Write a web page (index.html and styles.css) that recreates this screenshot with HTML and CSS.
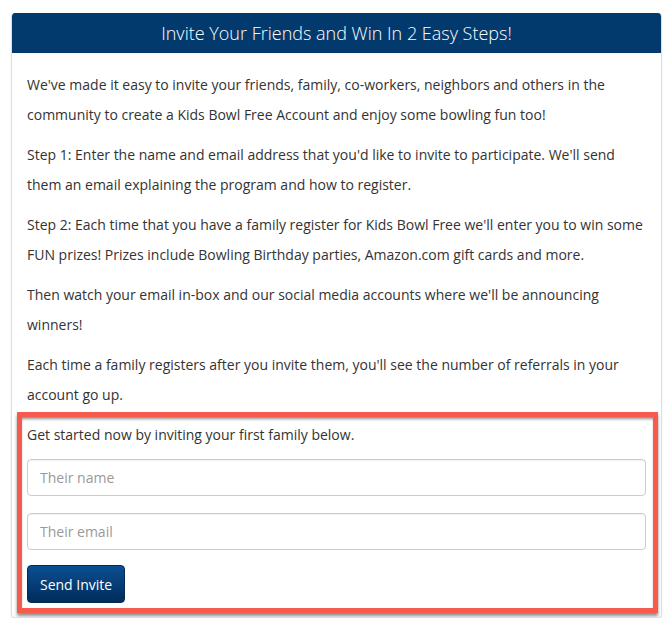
FILE: index.html
```html
<!DOCTYPE html>
<html lang="en">

<head>
    <meta charset="UTF-8">
    <meta name="viewport" content="width=device-width, initial-scale=1.0">
    <title>Invite Your Friends</title>
    <link rel="stylesheet" href="styles.css">
</head>

<body>
    <div class="card">
        <h1 class="card-title">Invite Your Friends and Win In 2 Easy Steps!</h1>
        <div class="card-body">
            <p>We've made it easy to invite your friends, family, co-workers, neighbors and others in the community to create a Kids Bowl Free Account and enjoy some bowling fun too!</p>
            <p>Step 1: Enter the name and email address that you'd like to invite to participate. We'll send them an email explaining the program and how to register.</p>
            <p>Step 2: Each time that you have a family register for Kids Bowl Free we'll enter you to win some FUN prizes! Prizes include Bowling Birthday parties, Amazon.com gift cards and more.</p>
            <p>Then watch your email in-box and our social media accounts where we'll be announcing winners!</p>
            <p>Each time a family registers after you invite them, you'll see the number of referrals in your account go up.</p>

            <form class="invite-box" id="invite-form">
                <div class="invite-intro">Get started now by inviting your first family below.</div>
                <input type="text" class="field" placeholder="Their name">
                <input type="email" class="field" placeholder="Their email">
                <button type="submit" class="btn-send">Send Invite</button>
            </form>
        </div>
    </div>
</body>

</html>
```

FILE: styles.css
```css
body {
    margin: 0;
    padding: 13px 9px 0 11px;
    background-color: #fff;
    font-family: "Open Sans", Arial, sans-serif;
    color: #333;
}

.card {
    width: 651px;
    box-sizing: border-box;
    border: 1px solid #dedede;
    border-top: none;
    border-radius: 4px;
    box-shadow: 0 1px 2px rgba(0, 0, 0, 0.08);
    overflow: hidden;
}

.card-title {
    margin: 0;
    height: 40px;
    line-height: 40px;
    background-color: #033a6e;
    color: #fff;
    font-size: 18px;
    font-weight: 300;
    text-align: center;
}

.card-body {
    padding: 17px 15px 4px 15px;
}

.card-body p {
    margin: 0 0 10px;
    font-size: 14px;
    line-height: 30px;
}

.card-body p:last-of-type {
    margin-bottom: 2px;
}

.invite-box {
    margin: 0 -12px 0 -10px;
    padding: 3px 7px 5px 5px;
    border: 5px solid #f65a4c;
    background-color: #fff;
    box-shadow: 0 3px 3px rgba(0, 0, 0, 0.45), inset 0 3px 3px -1px rgba(0, 0, 0, 0.45);
}

.invite-intro {
    font-size: 14px;
    line-height: 30px;
    margin-bottom: 9px;
}

.field {
    display: block;
    width: 100%;
    height: 37px;
    box-sizing: border-box;
    margin-bottom: 17px;
    padding: 0 12px;
    border: 1px solid #ccc;
    border-radius: 4px;
    box-shadow: inset 0 1px 1px rgba(0, 0, 0, 0.06);
    font-family: "Open Sans", Arial, sans-serif;
    font-size: 14px;
    color: #333;
}

.field + .field {
    margin-bottom: 15px;
}

.field::placeholder {
    color: #999;
}

.btn-send {
    display: block;
    height: 38px;
    padding: 0 12px;
    border: 1px solid #022a55;
    border-radius: 4px;
    background: linear-gradient(to bottom, #0b4f92, #012c5b);
    color: #fff;
    font-family: "Open Sans", Arial, sans-serif;
    font-size: 14px;
    cursor: pointer;
}
```
